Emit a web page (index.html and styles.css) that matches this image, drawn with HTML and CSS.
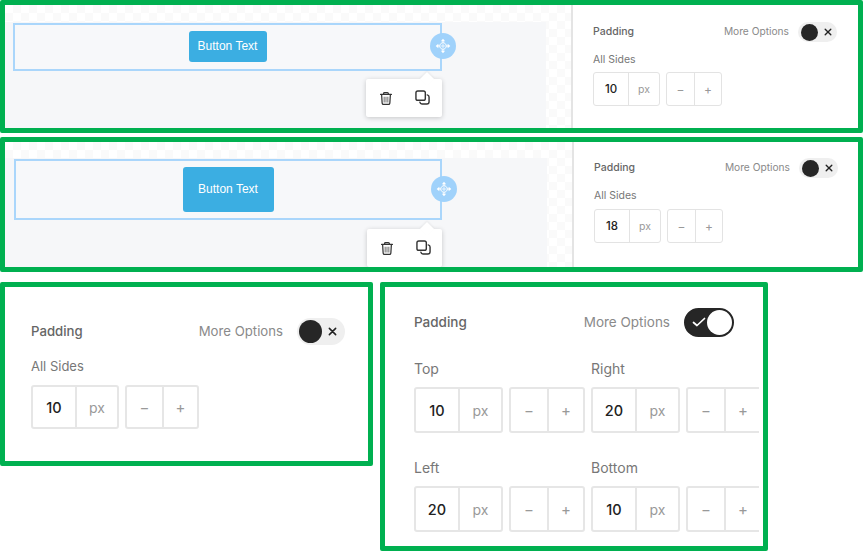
FILE: index.html
```html
<!DOCTYPE html>
<html lang="en">
<head>
<meta charset="utf-8">
<title>Padding control</title>
<link rel="stylesheet" href="styles.css">
</head>
<body>
<svg class="defs" width="0" height="0" aria-hidden="true">
  <symbol id="i-move" viewBox="0 0 24 24">
    <path d="M12 1 15.200 5H8.800zM12 23l-3.200-4h6.400zM1 12l4-3.200v6.400zM23 12l-4 3.200V8.800z" fill="#fff"/>
    <path d="M12 5.500 18.500 12 12 18.500 5.500 12z" fill="none" stroke="#fff" stroke-width="1.500"/>
    <path d="M12 4v16M4 12h16" stroke="#fff" stroke-width="1.100"/>
  </symbol>
  <symbol id="i-trash" viewBox="0 0 16 16">
    <path d="M1.800 3.400h12.400M5.300 3.200V2.300c0-.7.400-1.100 1.100-1.100h3.200c.7 0 1.100.4 1.100 1.100v.9M3 3.600l.6 9.700c.1.900.6 1.500 1.500 1.500h5.800c.9 0 1.400-.6 1.500-1.500l.6-9.700" fill="none" stroke="#333" stroke-width="1.400" stroke-linecap="round"/>
    <path d="M5.900 6v6.600M8 6v6.600M10.100 6v6.600" stroke="#777" stroke-width="1.200"/>
  </symbol>
  <symbol id="i-copy" viewBox="0 0 16 16">
    <rect x="1" y="1" width="10" height="10" rx="2" fill="none" stroke="#333" stroke-width="1.500"/>
    <path d="M13 5.200c1.200.2 2 1 2 2.200v5.200c0 1.400-1 2.400-2.400 2.400H7.400c-1.200 0-2-.8-2.200-2" fill="none" stroke="#333" stroke-width="1.500" stroke-linecap="round"/>
  </symbol>
  <symbol id="i-x" viewBox="0 0 10 10">
    <path d="M1.500 1.500l7 7M8.500 1.500l-7 7" stroke="#222" stroke-width="1.700" stroke-linecap="round"/>
  </symbol>
  <symbol id="i-check" viewBox="0 0 14 10">
    <path d="M1.500 5.500 5 8.500l7.500-7" fill="none" stroke="#fff" stroke-width="1.700" stroke-linecap="round" stroke-linejoin="round"/>
  </symbol>
</svg>

<section class="panel wide first">
  <div class="canvas">
    <div class="stage">
      <div class="row">
        <a class="btn">Button Text</a>
        <span class="handle"><svg class="handle-icon"><use href="#i-move"/></svg></span>
        <div class="popup">
          <svg class="trash"><use href="#i-trash"/></svg>
          <svg class="copy"><use href="#i-copy"/></svg>
        </div>
      </div>
    </div>
  </div>
  <div class="settings">
    <div class="head">
      <span class="title">Padding</span>
      <span class="more">More Options</span>
      <span class="toggle"><span class="knob"></span><svg class="x"><use href="#i-x"/></svg></span>
    </div>
    <div class="label">All Sides</div>
    <div class="controls">
      <div class="box"><span class="num">10</span><span class="unit">px</span></div>
      <div class="box"><span class="step">−</span><span class="step">+</span></div>
    </div>
  </div>
</section>

<section class="panel wide second">
  <div class="canvas">
    <div class="stage">
      <div class="row">
        <a class="btn">Button Text</a>
        <span class="handle"><svg class="handle-icon"><use href="#i-move"/></svg></span>
        <div class="popup">
          <svg class="trash"><use href="#i-trash"/></svg>
          <svg class="copy"><use href="#i-copy"/></svg>
        </div>
      </div>
    </div>
  </div>
  <div class="settings">
    <div class="head">
      <span class="title">Padding</span>
      <span class="more">More Options</span>
      <span class="toggle"><span class="knob"></span><svg class="x"><use href="#i-x"/></svg></span>
    </div>
    <div class="label">All Sides</div>
    <div class="controls">
      <div class="box"><span class="num">18</span><span class="unit">px</span></div>
      <div class="box"><span class="step">−</span><span class="step">+</span></div>
    </div>
  </div>
</section>

<div class="bottom">
  <section class="panel card-all">
    <div class="head">
      <span class="title">Padding</span>
      <span class="more">More Options</span>
      <span class="toggle"><span class="knob"></span><svg class="x"><use href="#i-x"/></svg></span>
    </div>
    <div class="label">All Sides</div>
    <div class="controls">
      <div class="box"><span class="num">10</span><span class="unit">px</span></div>
      <div class="box"><span class="step">−</span><span class="step">+</span></div>
    </div>
  </section>

  <section class="panel card-sides">
    <div class="head">
      <span class="title">Padding</span>
      <span class="more">More Options</span>
      <span class="toggle on"><svg class="check"><use href="#i-check"/></svg><span class="knob"></span></span>
    </div>
    <div class="sides">
      <div class="side">
        <div class="label">Top</div>
        <div class="controls">
          <div class="box"><span class="num">10</span><span class="unit">px</span></div>
          <div class="box"><span class="step">−</span><span class="step">+</span></div>
        </div>
      </div>
      <div class="side">
        <div class="label">Right</div>
        <div class="controls">
          <div class="box"><span class="num">20</span><span class="unit">px</span></div>
          <div class="box"><span class="step">−</span><span class="step">+</span></div>
        </div>
      </div>
      <div class="side">
        <div class="label">Left</div>
        <div class="controls">
          <div class="box"><span class="num">20</span><span class="unit">px</span></div>
          <div class="box"><span class="step">−</span><span class="step">+</span></div>
        </div>
      </div>
      <div class="side">
        <div class="label">Bottom</div>
        <div class="controls">
          <div class="box"><span class="num">10</span><span class="unit">px</span></div>
          <div class="box"><span class="step">−</span><span class="step">+</span></div>
        </div>
      </div>
    </div>
  </section>
</div>
</body>
</html>
```

FILE: styles.css
```css
* { box-sizing: border-box; }

html, body { margin: 0; padding: 0; background: #fff; }

body {
  width: 863px;
  height: 551px;
  overflow: hidden;
  font-family: Inter, "Liberation Sans", sans-serif;
}

.defs { position: absolute; }

/* Panels */
.panel {
  border: 5px solid #00b050;
  border-radius: 2px;
  background: #fff;
  overflow: hidden;
}

.wide { display: flex; width: 863px; }
.first { height: 133px; }
.second { height: 135px; margin-top: 4px; }

/* Canvas side */
.canvas {
  width: 567px;
  flex: none;
  padding: 17px 25px 0 0;
  background-color: #fff;
  background-image: conic-gradient(#fafafa 25%, #fff 0 50%, #fafafa 0 75%, #fff 0);
  background-size: 16px 16px;
}
.first .canvas { width: 566px; }
.second .canvas { padding-top: 16px; }

.stage {
  height: 100%;
  padding: 1px 0 0 8px;
  background: #f6f7f9;
}
.second .stage { padding-left: 9px; }

.row {
  position: relative;
  width: 429px;
  height: 48px;
  padding-top: 6px;
  display: flex;
  justify-content: center;
  align-items: flex-start;
  border: 2px solid #aad6fb;
  background: #f7f8fa;
}
.second .row { width: 428px; height: 61px; }

.btn {
  width: 78px;
  height: 31px;
  border-radius: 3px;
  background: #3baee2;
  color: #fff;
  font: 12px/31px "Liberation Sans", sans-serif;
  text-align: center;
}
.second .btn { width: 91px; height: 45px; line-height: 45px; }

.handle {
  position: absolute;
  right: -16px;
  top: 8px;
  width: 26px;
  height: 26px;
  border-radius: 50%;
  background: #a0d2fb;
  display: flex;
  align-items: center;
  justify-content: center;
}
.second .handle { top: 15px; right: -17px; }
.handle-icon { width: 16px; height: 16px; }

.popup {
  position: absolute;
  right: -2px;
  top: 54px;
  width: 76px;
  height: 38px;
  background: #fff;
  border-radius: 2px;
  box-shadow: 0 1px 5px rgba(0, 0, 0, .2);
  display: flex;
  align-items: center;
  gap: 22px;
  padding-left: 13px;
}
.second .popup { top: 68px; width: 75px; }
.popup::before {
  content: "";
  position: absolute;
  top: -5px;
  right: 10px;
  width: 10px;
  height: 10px;
  background: #fff;
  transform: rotate(45deg);
  box-shadow: -1px -1px 2px rgba(0, 0, 0, .06);
}
.trash { width: 14px; height: 15px; }
.copy { width: 15px; height: 15px; margin-top: -1px; }

/* Settings side */
.settings {
  flex: 1;
  border-left: 2px solid #e4e4e4;
  padding: 17px 21px 0 20px;
}
.second .settings { padding: 16px 20px 0 20px; }
.second .controls { margin-top: 6px; }
.settings .title, .settings .more { padding-bottom: 2px; }

.head { display: flex; align-items: center; height: 20px; }
.title { font-size: 10.500px; font-weight: 500; color: #666; }
.more { margin-left: auto; font-size: 10.200px; color: #8a8a8a; }

.toggle {
  position: relative;
  width: 39px;
  height: 20px;
  margin-left: 9px;
  border-radius: 10px;
  background: #efefef;
  display: flex;
  align-items: center;
  padding-left: 3px;
  flex: none;
}
.knob { width: 17px; height: 17px; border-radius: 50%; background: #262626; flex: none; }
.x { width: 8px; height: 8px; margin-left: 6px; }

.label { margin-top: 11px; font-size: 10.500px; line-height: 14px; color: #777; }

.controls { display: flex; gap: 6px; margin-top: 5px; }

.box {
  display: flex;
  height: 34px;
  border: 1px solid #e3e3e3;
  border-radius: 3px;
  background: #fff;
  color: #999;
  font-size: 10.500px;
}
.box > span {
  display: flex;
  align-items: center;
  justify-content: center;
}
.box > span + span { border-left: 1px solid #e3e3e3; }
.num { width: 34px; color: #222; font-size: 11.500px; font-weight: 500; }
.unit { width: 31px; }
.step { width: 27px; font-size: 12px; }

/* Bottom row */
.bottom { display: flex; gap: 7px; margin-top: 10px; align-items: flex-start; }

.card-all { width: 373px; height: 184px; padding: 30px 23px 0 26px; }
.card-sides { width: 388px; height: 269px; padding: 20px 0 0 29px; }

.card-all .box, .card-sides .box { border: 2px solid #e6e6e6; }
.card-all .box > span + span, .card-sides .box > span + span { border-left: 2px solid #e6e6e6; }

.card-all .head { height: 28px; }
.card-all .title, .card-all .more { font-size: 13.200px; }
.card-all .toggle { width: 48px; height: 27px; margin-left: 14px; border-radius: 14px; padding-left: 2px; }
.card-all .knob { width: 23px; height: 23px; }
.card-all .x { width: 9px; height: 9px; margin-left: 6px; }
.card-all .label { margin-top: 12px; font-size: 13px; line-height: 18px; }
.card-all .controls { margin-top: 10px; gap: 6px; }
.card-all .box { height: 44px; font-size: 14px; }
.card-all .num { width: 42px; font-size: 14.500px; }
.card-all .unit { width: 42px; }
.card-all .step { width: 35px; font-size: 15px; }

.card-sides .head { height: 30px; width: 320px; }
.card-sides .title, .card-sides .more { font-size: 13.500px; }
.card-sides .toggle {
  width: 50px;
  height: 29px;
  margin-left: 14px;
  padding-left: 0;
  border-radius: 15px;
  background: #262626;
  border: 2px solid #262626;
  justify-content: space-between;
}
.check { width: 14px; height: 10px; margin-left: 6px; }
.card-sides .knob { width: 25px; height: 25px; background: #fff; }

.sides {
  display: grid;
  grid-template-columns: 177px 170px;
  row-gap: 25px;
  margin-top: 22px;
  overflow: hidden;
  width: 345px;
}
.card-sides .label { margin-top: 0; font-size: 14px; line-height: 20px; }
.card-sides .controls { margin-top: 8px; gap: 6px; }
.card-sides .box { height: 46px; font-size: 14px; }
.card-sides .num { width: 42px; font-size: 14.500px; }
.card-sides .unit { width: 43px; }
.card-sides .step { width: 36px; font-size: 15px; }
```
